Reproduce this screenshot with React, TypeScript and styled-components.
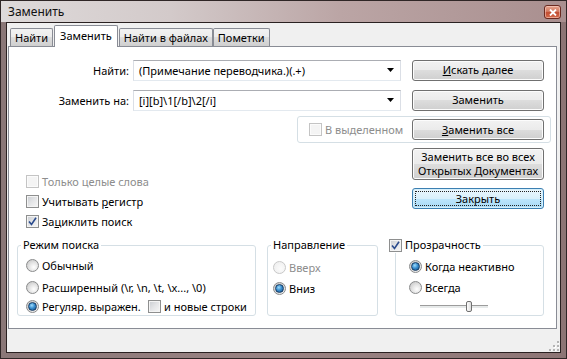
import styled, { createGlobalStyle, css } from "styled-components";

const GlobalStyle = createGlobalStyle`
  * { box-sizing: border-box; }
  html, body { margin: 0; padding: 0; background: #ffffff; }
  body {
    font-family: "Noto Sans", "Open Sans", sans-serif;
    font-size: 11px;
    color: #000;
  }
`;

const Window = styled.div`
  width: 567px;
  height: 359px;
  border: 1px solid #2f2626;
  display: flex;
  flex-direction: column;
  background: linear-gradient(to right, #8a7777, #9b8484 50%, #8d7575);
  overflow: hidden;
`;

const TitleBar = styled.div`
  height: 21px;
  flex: 0 0 21px;
  padding: 0 5px 0 7px;
  display: flex;
  align-items: center;
  justify-content: space-between;
  background: linear-gradient(to right, #dedada 0%, #d3caca 30%, #bba5a5 60%, #a98f8f 100%);
`;

const Title = styled.span`
  font-size: 12px;
  line-height: 16px;
  color: #111;
`;

const CloseButton = styled.div`
  width: 17px;
  height: 14px;
  margin-top: 1px;
  border: 1px solid #6b2a20;
  border-radius: 3px;
  display: flex;
  align-items: center;
  justify-content: center;
  background: linear-gradient(#e6a48f 0%, #d37a61 45%, #c14d32 55%, #d56b4c 100%);
  box-shadow: inset 0 0 0 1px rgba(255, 220, 210, 0.5);
`;

const Body = styled.div`
  flex: 1;
  padding: 0 5px 5px;
  display: flex;
`;

const Client = styled.div`
  flex: 1;
  border: 1px solid #2a2121;
  background: #f0f0f0;
  display: flex;
  flex-direction: column;
`;

const TabStrip = styled.div`
  height: 23px;
  flex: 0 0 23px;
  padding-left: 3px;
  display: flex;
  align-items: flex-end;
`;

const Tab = styled.div<{ $active?: boolean }>`
  height: ${(p) => (p.$active ? 22 : 18)}px;
  padding: ${(p) => (p.$active ? "2px 5px 0" : "1px 4px 0")};
  margin: 0 ${(p) => (p.$active ? 1 : 0)}px ${(p) => (p.$active ? -1 : 0)}px;
  border: 1px solid #898c95;
  border-bottom: none;
  border-radius: 2px 2px 0 0;
  line-height: 16px;
  white-space: nowrap;
  position: relative;
  z-index: ${(p) => (p.$active ? 1 : 0)};
  background: ${(p) =>
    p.$active
      ? "#ffffff"
      : "linear-gradient(#f2f2f2 0%, #ebebeb 50%, #dddddd 50%, #cfcfcf 100%)"};
`;

const Panel = styled.div`
  height: 283px;
  flex: 0 0 283px;
  margin: 0 3px 0 1px;
  border: 1px solid #898c95;
  background: #ffffff;
  padding: 12px 0 0 8px;
  display: flex;
  flex-direction: column;
`;

const BottomStrip = styled.div`
  flex: 1;
  display: flex;
  justify-content: flex-end;
  align-items: flex-end;
  padding: 0 1px 1px 0;
`;

const FieldRow = styled.div<{ $mt?: number }>`
  height: 22px;
  margin-top: ${(p) => p.$mt ?? 0}px;
  display: flex;
  align-items: center;
`;

const FieldLabel = styled.span`
  width: 112px;
  text-align: right;
  white-space: nowrap;
`;

const Combo = styled.div`
  width: 268px;
  height: 21px;
  margin-left: 4px;
  padding: 0 6px 0 5px;
  display: flex;
  align-items: center;
  justify-content: space-between;
  background: #fff;
  border: 1px solid #dbdfe6;
  border-top-color: #abadb3;
  border-bottom-color: #e3e9ef;
  white-space: nowrap;
`;

const Button = styled.div<{ $tall?: boolean; $default?: boolean; $ml?: number }>`
  width: 132px;
  height: ${(p) => (p.$tall ? 32 : 21)}px;
  margin-left: ${(p) => p.$ml ?? 0}px;
  flex: 0 0 auto;
  display: flex;
  align-items: center;
  justify-content: center;
  text-align: center;
  line-height: 14px;
  white-space: nowrap;
  border: 1px solid #707070;
  border-radius: 3px;
  background: linear-gradient(#f2f2f2 0%, #ebebeb 50%, #dddddd 50%, #cfcfcf 100%);
  box-shadow: inset 0 0 0 1px #fcfcfc;
  ${(p) =>
    p.$default &&
    css`
      border-color: #3c7fb1;
      background: linear-gradient(#eaf6fd 0%, #d9f0fc 50%, #bee6fd 50%, #a7d9f5 100%);
      box-shadow: inset 0 0 0 1px #d6f0fc;
      outline: 1px dotted #222;
      outline-offset: -4px;
    `}
`;

const SelectionRow = styled.div`
  margin-top: 5px;
  padding-left: 280px;
  display: flex;
`;

const SelectionFrame = styled.div`
  width: 254px;
  height: 27px;
  padding: 0 6px 0 11px;
  border: 1px solid #d5dfe5;
  border-radius: 3px;
  display: flex;
  align-items: center;
  justify-content: space-between;
`;

const MiddleRow = styled.div`
  margin-top: 5px;
  display: flex;
`;

const OptionsColumn = styled.div`
  width: 395px;
  padding: 23px 0 0 9px;
  display: flex;
  flex-direction: column;
`;

const ButtonColumn = styled.div`
  display: flex;
  flex-direction: column;
  gap: 8px;
`;

const OptionRow = styled.label<{ $mt?: number; $disabled?: boolean; $w?: number }>`
  height: 20px;
  margin-top: ${(p) => p.$mt ?? 0}px;
  ${(p) => p.$w && `width: ${p.$w}px; flex: 0 0 ${p.$w}px;`}
  display: flex;
  align-items: center;
  gap: 3px;
  white-space: nowrap;
  color: ${(p) => (p.$disabled ? "#8d8d8d" : "#000")};
`;

const CheckBox = styled.span<{ $disabled?: boolean }>`
  width: 13px;
  height: 13px;
  flex: 0 0 13px;
  border: 1px solid ${(p) => (p.$disabled ? "#c4c4c4" : "#8e8f8f")};
  background: ${(p) =>
    p.$disabled ? "#f4f4f4" : "linear-gradient(135deg, #c9ccd1 0%, #e4e5e7 50%, #f7f7f7 100%)"};
  box-shadow: inset 0 0 0 1px ${(p) => (p.$disabled ? "#fbfbfb" : "#f4f4f4")};
  display: flex;
  align-items: center;
  justify-content: center;
`;

const Radio = styled.span<{ $checked?: boolean; $disabled?: boolean }>`
  width: 13px;
  height: 13px;
  flex: 0 0 13px;
  border-radius: 50%;
  border: 1px solid ${(p) => (p.$disabled ? "#c8c8c8" : "#8a8b8c")};
  background: ${(p) =>
    p.$disabled
      ? "radial-gradient(circle at 60% 60%, #fbfbfb, #ececec)"
      : "radial-gradient(circle at 62% 65%, #ffffff 0%, #e4e4e4 45%, #bdbdbd 100%)"};
  display: flex;
  align-items: center;
  justify-content: center;
  &::after {
    content: "";
    display: ${(p) => (p.$checked ? "block" : "none")};
    width: 7px;
    height: 7px;
    border-radius: 50%;
    border: 1px solid #173b63;
    background: radial-gradient(circle at 40% 35%, #9fdcfb 0%, #3a8fd0 45%, #114a80 100%);
  }
`;

const GroupsRow = styled.div`
  margin-top: 6px;
  display: flex;
`;

const Group = styled.fieldset<{ $w: number; $ml?: number; $pl: number }>`
  width: ${(p) => p.$w}px;
  height: 79px;
  margin: 0 0 0 ${(p) => p.$ml ?? 0}px;
  padding: 0 0 0 ${(p) => p.$pl}px;
  border: 1px solid #d5dfe5;
  border-radius: 3px;
  min-width: 0;
`;

/* legend sits after the fieldset's left padding, so $ml pulls it back */
const Legend = styled.legend<{ $ml: number; $pl?: number }>`
  margin-left: ${(p) => p.$ml}px;
  padding: 0 2px 0 ${(p) => p.$pl ?? 2}px;
  line-height: 16px;
  display: flex;
  align-items: center;
  gap: 3px;
  white-space: nowrap;
`;

const InlineRow = styled.div`
  display: flex;
  align-items: center;
  margin-top: -1px;
`;

const SliderRow = styled.div`
  height: 12px;
  margin: 3px 0 0 11px;
  display: flex;
  align-items: center;
`;

const SliderTrack = styled.div`
  width: 68px;
  height: 3px;
  border-top: 1px solid #9c9c9c;
  background: #e7eaea;
  position: relative;
`;

const SliderThumb = styled.div`
  position: absolute;
  top: -5px;
  width: 6px;
  height: 11px;
  border: 1px solid #707070;
  border-radius: 2px;
  background: linear-gradient(to right, #fdfdfd, #dcdcdc);
`;

const Check = ({ checked, disabled }: { checked?: boolean; disabled?: boolean }) => (
  <CheckBox $disabled={disabled}>
    {checked && (
      <svg width="9" height="9" viewBox="0 0 9 9">
        <path d="M1 4.5 L3.5 7.5 L8 0.8" fill="none" stroke="#2a4b8d" strokeWidth="1.6" />
      </svg>
    )}
  </CheckBox>
);

const DropArrow = () => (
  <svg width="7" height="4" viewBox="0 0 7 4">
    <path d="M0 0 H7 L3.5 4 Z" fill="#000" />
  </svg>
);

const Grip = () => (
  <svg width="10" height="10" viewBox="0 0 10 10">
    {[
      [8, 0],
      [8, 4],
      [4, 4],
      [8, 8],
      [4, 8],
      [0, 8],
    ].map(([x, y]) => (
      <g key={`${x}-${y}`}>
        <rect x={x + 1} y={y + 1} width="2" height="2" fill="#ffffff" />
        <rect x={x} y={y} width="2" height="2" fill="#b4b4b4" />
      </g>
    ))}
  </svg>
);

export default function App() {
  const sliderPos = 46;
  return (
    <>
      <GlobalStyle />
      <Window>
        <TitleBar>
          <Title>Заменить</Title>
          <CloseButton>
            <svg width="8" height="7" viewBox="0 0 8 7">
              <path d="M1 0.5 L7 6.5 M7 0.5 L1 6.5" stroke="#fff" strokeWidth="1.8" />
            </svg>
          </CloseButton>
        </TitleBar>
        <Body>
          <Client>
            <TabStrip>
              <Tab>Найти</Tab>
              <Tab $active>Заменить</Tab>
              <Tab>Найти в файлах</Tab>
              <Tab>Пометки</Tab>
            </TabStrip>
            <Panel>
              <FieldRow>
                <FieldLabel>Найти:</FieldLabel>
                <Combo>
                  <span>(Примечание переводчика.)(.+)</span>
                  <DropArrow />
                </Combo>
                <Button $ml={11}>
                  <span>
                    <u>И</u>скать далее
                  </span>
                </Button>
              </FieldRow>
              <FieldRow $mt={8}>
                <FieldLabel>Заменить на:</FieldLabel>
                <Combo>
                  <span>[i][b]\1[/b]\2[/i]</span>
                  <DropArrow />
                </Combo>
                <Button $ml={11}>Заменить</Button>
              </FieldRow>
              <SelectionRow>
                <SelectionFrame>
                  <OptionRow $disabled>
                    <Check disabled />В выделенном
                  </OptionRow>
                  <Button>
                    <span>
                      <u>З</u>аменить все
                    </span>
                  </Button>
                </SelectionFrame>
              </SelectionRow>
              <MiddleRow>
                <OptionsColumn>
                  <OptionRow $disabled>
                    <Check disabled />
                    Только целые слова
                  </OptionRow>
                  <OptionRow>
                    <Check />
                    <span>
                      Учитывать <u>р</u>егистр
                    </span>
                  </OptionRow>
                  <OptionRow>
                    <Check checked />
                    <span>
                      За<u>ц</u>иклить поиск
                    </span>
                  </OptionRow>
                </OptionsColumn>
                <ButtonColumn>
                  <Button $tall>
                    <span>
                      Заменить все во всех
                      <br />
                      Открытых <u>Д</u>окументах
                    </span>
                  </Button>
                  <Button $default>Закрыть</Button>
                </ButtonColumn>
              </MiddleRow>
              <GroupsRow>
                <Group $w={239} $pl={8}>
                  <Legend $ml={-5}>Режим поиска</Legend>
                  <OptionRow $mt={2}>
                    <Radio />
                    Обычный
                  </OptionRow>
                  <OptionRow $mt={2}>
                    <Radio />
                    Расширенный (\r, \n, \t, \x..., \0)
                  </OptionRow>
                  <InlineRow>
                    <OptionRow $w={122}>
                      <Radio $checked />
                      Регуляр. выражен.
                    </OptionRow>
                    <OptionRow>
                      <Check />и новые строки
                    </OptionRow>
                  </InlineRow>
                </Group>
                <Group $w={111} $ml={11} $pl={5}>
                  <Legend $ml={-2}>Направление</Legend>
                  <OptionRow $mt={4} $disabled>
                    <Radio $disabled />
                    Вверх
                  </OptionRow>
                  <OptionRow $mt={1}>
                    <Radio $checked />
                    Вниз
                  </OptionRow>
                </Group>
                <Group $w={149} $ml={17} $pl={13}>
                  <Legend $ml={-20} $pl={0}>
                    <Check checked />
                    Прозрачность
                  </Legend>
                  <OptionRow $mt={3}>
                    <Radio $checked />
                    Когда неактивно
                  </OptionRow>
                  <OptionRow $mt={1}>
                    <Radio />
                    Всегда
                  </OptionRow>
                  <SliderRow>
                    <SliderTrack>
                      <SliderThumb style={{ left: sliderPos }} />
                    </SliderTrack>
                  </SliderRow>
                </Group>
              </GroupsRow>
            </Panel>
            <BottomStrip>
              <Grip />
            </BottomStrip>
          </Client>
        </Body>
      </Window>
    </>
  );
}
